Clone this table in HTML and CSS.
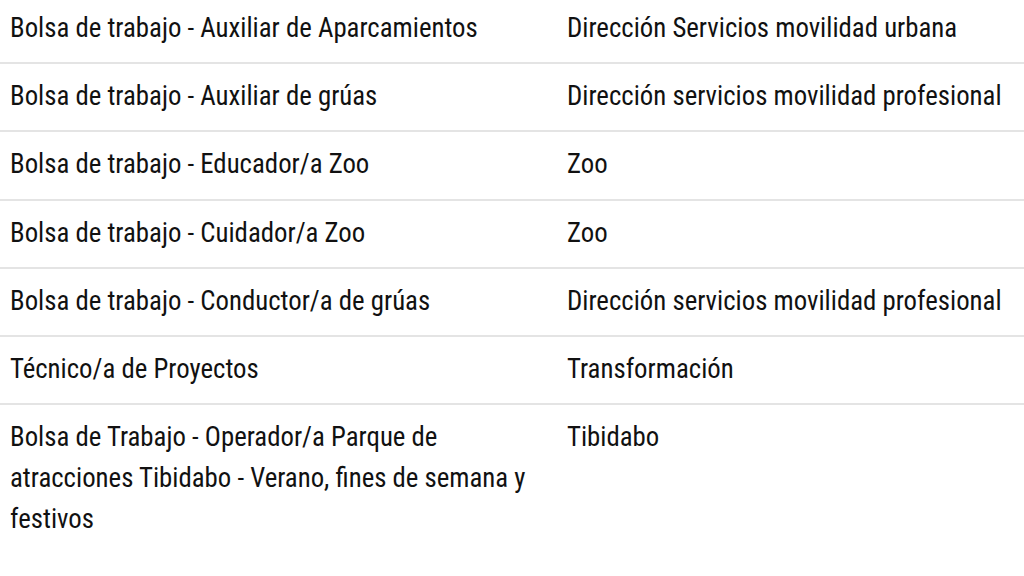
FILE: index.html
```html
<!DOCTYPE html>
<html lang="es">
<head>
<meta charset="utf-8">
<link rel="stylesheet" href="styles.css">
</head>
<body>
<table class="jobs">
  <colgroup><col class="col-title"><col class="col-dept"></colgroup>
  <tbody>
    <tr><td>Bolsa de trabajo - Auxiliar de Aparcamientos</td><td>Dirección Servicios movilidad urbana</td></tr>
    <tr><td>Bolsa de trabajo - Auxiliar de grúas</td><td>Dirección servicios movilidad profesional</td></tr>
    <tr><td>Bolsa de trabajo - Educador/a Zoo</td><td>Zoo</td></tr>
    <tr><td>Bolsa de trabajo - Cuidador/a Zoo</td><td>Zoo</td></tr>
    <tr><td>Bolsa de trabajo - Conductor/a de grúas</td><td>Dirección servicios movilidad profesional</td></tr>
    <tr><td>Técnico/a de Proyectos</td><td>Transformación</td></tr>
    <tr><td>Bolsa de Trabajo - Operador/a Parque de atracciones Tibidabo - Verano, fines de semana y festivos</td><td>Tibidabo</td></tr>
  </tbody>
</table>
</body>
</html>
```
FILE: styles.css
```css
html, body {
  margin: 0;
  background: #ffffff;
}
body {
  font-family: "Roboto Condensed", "Noto Sans Condensed", "Open Sans Condensed", "Liberation Sans", sans-serif;
  color: #111111;
  overflow: hidden;
}
.jobs {
  width: 1040px;
  border-collapse: collapse;
  table-layout: fixed;
}
.col-title { width: 557px; }
.jobs td {
  font-size: 26.8px;
  line-height: 41px;
  vertical-align: top;
  padding: 12px 10px 13.2px 10px;
  border-top: 2px solid #e4e4e4;
}
.jobs td:last-child {
  white-space: nowrap;
}
.jobs tr:first-child td {
  border-top: none;
  padding-top: 8px;
}
```
